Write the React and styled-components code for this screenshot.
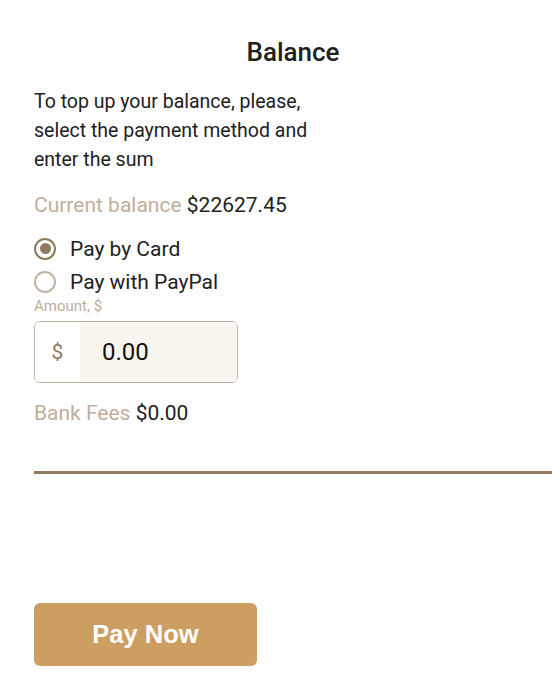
import React, { useState } from 'react'
import styled, { createGlobalStyle } from 'styled-components'

const GlobalStyle = createGlobalStyle`
  html, body {
    margin: 0;
    padding: 0;
    background: #fff;
  }
  body {
    font-family: Roboto, "Liberation Sans", Arial, sans-serif;
    color: #212121;
  }
`;

const Container = styled.div`
  padding: 37px 0 0 34px;
  display: flex;
  flex-direction: column;
`;

const Title = styled.h1`
  margin: 0;
  font-size: 26px;
  line-height: 31px;
  font-weight: 500;
  text-align: center;
  color: #212121;
`;

const Intro = styled.p`
  margin: 20px 0 0;
  max-width: 290px;
  font-size: 19.5px;
  line-height: 28.8px;
`;

const InfoLine = styled.div`
  margin-top: ${p => p.$top}px;
  font-size: 21px;
  line-height: 28.8px;
`;

const Muted = styled.span`
  color: #bfae9d;
`;

const Methods = styled.div`
  margin-top: 12px;
  display: flex;
  flex-direction: column;
`;

const RadioRow = styled.label`
  display: flex;
  align-items: center;
  gap: 14px;
  height: 33px;
  font-size: 21px;
  cursor: pointer;
`;

const RadioCircle = styled.span`
  width: 22px;
  height: 22px;
  box-sizing: border-box;
  border-radius: 50%;
  border: 2.5px solid ${p => (p.$checked ? '#8f7a5e' : '#c2b3a3')};
  display: flex;
  align-items: center;
  justify-content: center;
  &::after {
    content: '';
    width: 11px;
    height: 11px;
    border-radius: 50%;
    background: #8f7a5e;
    display: ${p => (p.$checked ? 'block' : 'none')};
  }
`;

const FieldLabel = styled.div`
  font-size: 15px;
  line-height: 16px;
  color: #bfae9d;
`;

const InputBox = styled.div`
  margin-top: 7px;
  width: 204px;
  height: 62px;
  box-sizing: border-box;
  border: 1px solid #c2b3a3;
  border-radius: 6px;
  display: flex;
  overflow: hidden;
`;

const Prefix = styled.span`
  width: 45px;
  display: flex;
  align-items: center;
  justify-content: center;
  background: #fff;
  color: #8f7a5e;
  font-size: 21px;
`;

const AmountInput = styled.input`
  flex: 1;
  min-width: 0;
  border: none;
  outline: none;
  background: #f8f5ef;
  padding: 0 0 0 22px;
  font-family: Roboto, "Liberation Sans", Arial, sans-serif;
  font-size: 24px;
  color: #111;
`;

const Divider = styled.hr`
  margin: 43px 0 0;
  border: none;
  height: 3px;
  background: #8f7a5e;
`;

const PayButton = styled.button`
  margin-top: 129px;
  width: 223px;
  height: 63px;
  border: none;
  border-radius: 6px;
  background: #cd9e62;
  color: #fff;
  font-family: "Liberation Sans", Arial, sans-serif;
  font-weight: 700;
  font-size: 25.5px;
  cursor: pointer;
`;

const methods = [
  { id: 'card', label: 'Pay by Card' },
  { id: 'paypal', label: 'Pay with PayPal' },
];

const App = () => {
  const [method, setMethod] = useState('card');
  const [amount, setAmount] = useState('0.00');

  return (
    <>
      <GlobalStyle />
      <Container>
        <Title>Balance</Title>
        <Intro>To top up your balance, please, select the payment method and enter the sum</Intro>
        <InfoLine $top={17}>
          <Muted>Current balance</Muted> $22627.45
        </InfoLine>
        <Methods>
          {methods.map(m => (
            <RadioRow key={m.id} onClick={() => setMethod(m.id)}>
              <RadioCircle $checked={method === m.id} />
              {m.label}
            </RadioRow>
          ))}
        </Methods>
        <FieldLabel>Amount, $</FieldLabel>
        <InputBox>
          <Prefix>$</Prefix>
          <AmountInput value={amount} onChange={e => setAmount(e.target.value)} />
        </InputBox>
        <InfoLine $top={16}>
          <Muted>Bank Fees</Muted> $0.00
        </InfoLine>
        <Divider />
        <div>
          <PayButton>Pay Now</PayButton>
        </div>
      </Container>
    </>
  )
}

export default App
